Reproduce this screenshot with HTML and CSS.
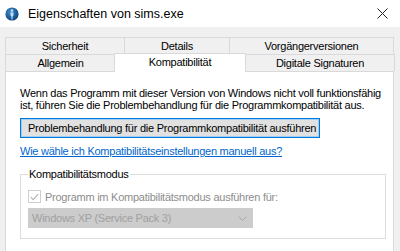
FILE: index.html
```html
<!DOCTYPE html>
<html lang="de">
<head>
  <meta charset="UTF-8">
  <title>Eigenschaften von sims.exe</title>
  <link rel="stylesheet" href="styles.css">
</head>
<body>
  <div class="window">
    <div class="titlebar">
      <svg class="app-icon" width="14" height="14" viewBox="0 0 14 14">
        <defs>
          <radialGradient id="ball" cx="0.4" cy="0.35" r="0.7">
            <stop offset="0" stop-color="#3f8fd0"/>
            <stop offset="1" stop-color="#0b3f78"/>
          </radialGradient>
        </defs>
        <circle cx="7" cy="7" r="6.6" fill="url(#ball)"/>
        <circle cx="7" cy="3.6" r="1.3" fill="#bfe0f5"/>
        <path d="M5.3 5.4h3.4l-0.4 3.6h-0.6l-0.2 3.4h-1l-0.2-3.4h-0.6z" fill="#bfe0f5"/>
      </svg>
      <div class="title">Eigenschaften von sims.exe</div>
      <svg class="close" width="11" height="11" viewBox="0 0 11 11">
        <path d="M0.5 0.5l10 10M10.5 0.5l-10 10" stroke="#222" stroke-width="1"/>
      </svg>
    </div>

    <div class="dialog">
      <div class="tab-row">
        <div class="tab tab-sicherheit">Sicherheit</div>
        <div class="tab tab-details">Details</div>
        <div class="tab tab-vorg">Vorgängerversionen</div>
      </div>
      <div class="tab-row">
        <div class="tab tab-allgemein">Allgemein</div>
        <div class="tab tab-kompat selected">Kompatibilität</div>
        <div class="tab tab-digital">Digitale Signaturen</div>
      </div>

      <div class="panel">
        <p class="intro">Wenn das Programm mit dieser Version von Windows nicht voll funktionsfähig ist, führen Sie die Problembehandlung für die Programmkompatibilität aus.</p>
        <button class="trouble-button">Problembehandlung für die Programmkompatibilität ausführen</button>
        <a class="help-link" href="#">Wie wähle ich Kompatibilitätseinstellungen manuell aus?</a>

        <fieldset class="group">
          <legend>Kompatibilitätsmodus</legend>
          <label class="check">
            <span class="box">
              <svg width="9" height="8" viewBox="0 0 9 8"><path d="M0.8 4.2l2.4 2.4 5-5.4" fill="none" stroke="#b4b4b4" stroke-width="1.1"/></svg>
            </span>
            Programm im Kompatibilitätsmodus ausführen für:
          </label>
          <div class="combo">
            <span>Windows XP (Service Pack 3)</span>
            <svg width="9" height="5" viewBox="0 0 9 5"><path d="M0.5 0.5l4 4 4-4" fill="none" stroke="#a8a8a8" stroke-width="1"/></svg>
          </div>
        </fieldset>
      </div>
    </div>
  </div>
</body>
</html>
```

FILE: styles.css
```css
body {
  margin: 0;
  font-family: "Liberation Sans", Arial, sans-serif;
  font-size: 11px;
  letter-spacing: -0.25px;
  color: #000;
  background-color: #f0f0f0;
}
.window {
  width: 400px;
  height: 251px;
  overflow: hidden;
}
.titlebar {
  height: 27px;
  background-color: #fff;
  display: flex;
  align-items: center;
  padding-left: 5px;
}
.app-icon {
  margin-right: 9px;
}
.title {
  flex: 1;
  font-size: 12.5px;
  letter-spacing: 0;
}
.close {
  margin-right: 12px;
}
.dialog {
  padding: 10px 0 0 5px;
}
.tab-row {
  display: flex;
  height: 17px;
}
.tab {
  box-sizing: border-box;
  border: 1px solid #d9d9d9;
  border-bottom: none;
  margin-right: -1px;
  text-align: center;
  line-height: 16px;
  background-color: #f0f0f0;
}
.tab-sicherheit { width: 120px; }
.tab-details { width: 106px; }
.tab-vorg { width: 165px; }
.tab-allgemein { width: 111px; }
.tab-kompat { width: 130px; }
.tab-digital { width: 150px; }
.tab.selected {
  background-color: #fff;
  position: relative;
  z-index: 1;
  height: 19px;
  margin-top: -1px;
  margin-left: -1px;
  width: 132px;
}
.panel {
  width: 389px;
  height: 200px;
  box-sizing: border-box;
  background-color: #fff;
  border: 1px solid #d9d9d9;
  padding: 15px 0 0 14px;
}
.intro {
  margin: 0;
  line-height: 12px;
  width: 372px;
}
.trouble-button {
  display: block;
  margin-top: 7px;
  width: 300px;
  height: 20px;
  padding: 0 0 0 7px;
  text-align: left;
  white-space: nowrap;
  font-family: inherit;
  font-size: 11px;
  letter-spacing: -0.25px;
  background-color: #e1e1e1;
  border: 1px solid #0078d7;
  box-shadow: inset 0 0 0 1px #9fcdf3;
}
.help-link {
  display: inline-block;
  margin-top: 7px;
  color: #0066cc;
  text-decoration: underline;
}
.group {
  margin: 11px 0 0 0;
  width: 366px;
  height: 71px;
  box-sizing: border-box;
  border: 1px solid #dcdcdc;
  padding: 0 0 0 7px;
}
.group legend {
  padding: 0 1px;
}
.check {
  display: flex;
  align-items: center;
  color: #8d8d8d;
  margin-top: 10px;
}
.box {
  width: 11px;
  height: 11px;
  border: 1px solid #cfcfcf;
  margin-right: 4px;
  display: flex;
  align-items: center;
  justify-content: center;
}
.combo {
  margin-top: 5px;
  width: 225px;
  height: 20px;
  box-sizing: border-box;
  background-color: #cccccc;
  display: flex;
  align-items: center;
  justify-content: space-between;
  padding: 0 6px 0 4px;
  color: #a0a0a0;
}
```
